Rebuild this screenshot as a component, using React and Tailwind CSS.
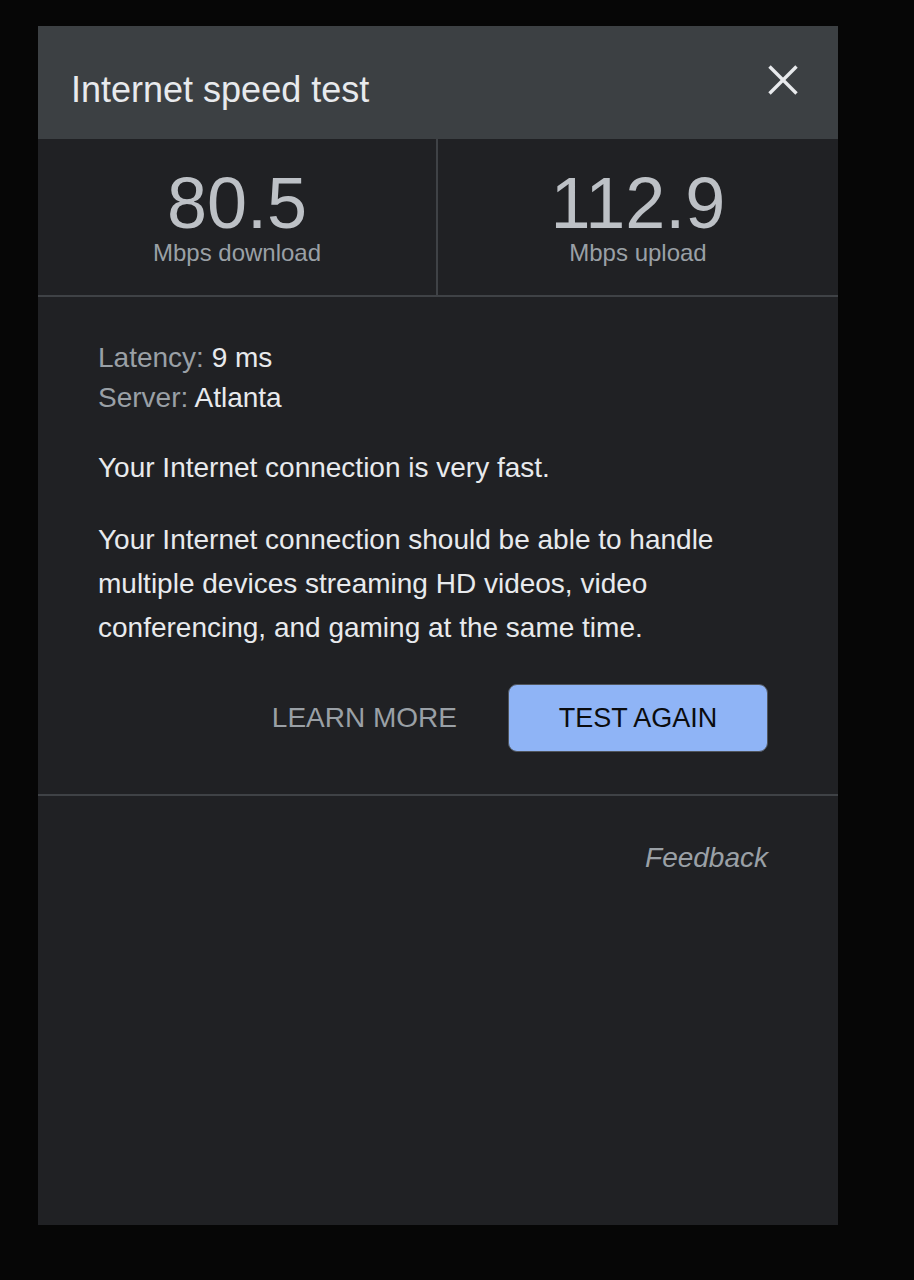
export default function App() {
  const font = { fontFamily: '"Liberation Sans", Arial, Helvetica, sans-serif' };
  return (
    <div className="min-h-screen w-full bg-[#060606] pt-[26px] pl-[38px] pb-[55px]" style={font}>
      <div className="w-[800px] h-[1199px] bg-[#202124] flex flex-col">
        {/* Header */}
        <div className="h-[113px] bg-[#3c4043] flex items-start pl-[33px] pr-[31px]">
          <div className="mt-[46px] text-[36px] leading-[36px] text-[#e8eaed]">Internet speed test</div>
          <button className="ml-auto mt-[30px] w-[48px] h-[48px]" aria-label="Close">
            <svg width="48" height="48" viewBox="0 0 48 48">
              <line x1="10.5" y1="10.5" x2="37.5" y2="37.5" stroke="#e8eaed" strokeWidth="3.4" />
              <line x1="37.5" y1="10.5" x2="10.5" y2="37.5" stroke="#e8eaed" strokeWidth="3.4" />
            </svg>
          </button>
        </div>

        {/* Stats */}
        <div className="grid grid-cols-2 border-b-2 border-[#3f4246]">
          <div className="h-[156px] flex flex-col items-center justify-center border-r-2 border-[#3f4246]">
            <div className="text-[72px] leading-[70px] text-[#bdc1c6]">80.5</div>
            <div className="mt-[2px] text-[24px] leading-[26px] text-[#9aa0a6]">Mbps download</div>
          </div>
          <div className="h-[156px] flex flex-col items-center justify-center">
            <div className="text-[72px] leading-[70px] text-[#bdc1c6]">112.9</div>
            <div className="mt-[2px] text-[24px] leading-[26px] text-[#9aa0a6]">Mbps upload</div>
          </div>
        </div>

        {/* Info */}
        <div className="pl-[60px] pr-[70px] pt-[41px] pb-[42px] border-b-2 border-[#3f4246]">
          <div className="text-[28px] leading-[40px]">
            <div>
              <span className="text-[#9aa0a6]">Latency: </span>
              <span className="text-[#e8eaed]">9 ms</span>
            </div>
            <div>
              <span className="text-[#9aa0a6]">Server: </span>
              <span className="text-[#e8eaed]">Atlanta</span>
            </div>
          </div>
          <p className="mt-[28px] text-[28px] leading-[44px] text-[#e8eaed]">
            Your Internet connection is very fast.
          </p>
          <p className="mt-[28px] text-[28px] leading-[44px] text-[#e8eaed]">
            Your Internet connection should be able to handle multiple devices streaming HD videos, video conferencing, and gaming at the same time.
          </p>
          <div className="mt-[34px] flex items-center justify-end gap-[51px]">
            <button className="text-[28px] leading-[32px] text-[#9aa0a6]">LEARN MORE</button>
            <button className="w-[260px] h-[68px] rounded-[9px] bg-[#8fb4f6] border border-[#50555c] text-[27px] leading-[32px] text-[#0b0c0e]">
              TEST AGAIN
            </button>
          </div>
        </div>

        {/* Feedback */}
        <div className="pr-[70px] pt-[42px] flex justify-end">
          <span className="italic text-[28px] leading-[40px] text-[#9aa0a6]">Feedback</span>
        </div>
      </div>
    </div>
  );
}
